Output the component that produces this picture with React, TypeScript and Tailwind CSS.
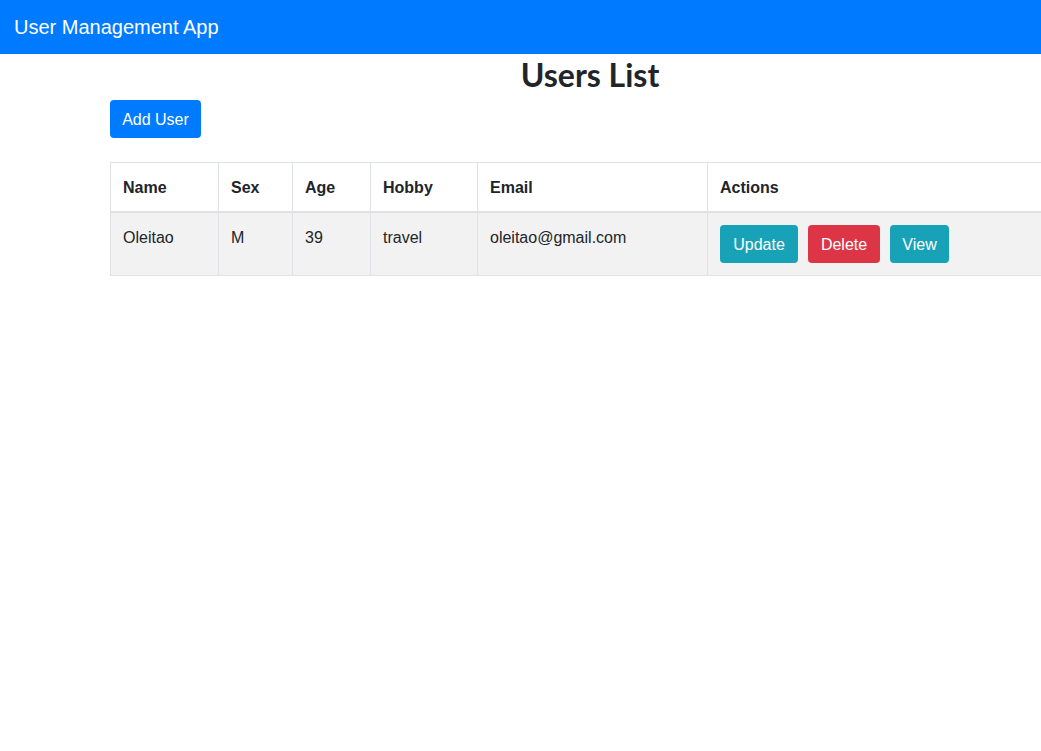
export default function App() {
  const font = { fontFamily: '"Liberation Sans", Arial, sans-serif' };
  const cell = "border border-[#dee2e6] px-3 pt-[13px] pb-[11px] align-top";
  return (
    <div className="w-full overflow-hidden bg-white text-[#212529]" style={font}>
      {/* Navbar */}
      <nav className="h-[54px] bg-[#007bff] flex items-center pl-[14px]">
        <span className="text-[20px] text-white leading-[30px]">User Management App</span>
      </nav>

      {/* Contenido */}
      <div className="ml-[110px] w-[960px]">
        <h2 className="mt-[2px] h-[38px] text-center text-[32px] leading-[38px] font-bold font-['Lato',sans-serif]">
          Users List
        </h2>
        <button className="mt-[6px] w-[91px] h-[38px] pt-[1px] rounded bg-[#007bff] text-white text-[16px] leading-6">
          Add User
        </button>

        <table className="mt-6 w-[960px] border-collapse table-fixed text-[16px] leading-6">
          <colgroup>
            <col className="w-[108px]" />
            <col className="w-[74px]" />
            <col className="w-[78px]" />
            <col className="w-[107px]" />
            <col className="w-[230px]" />
            <col />
          </colgroup>
          <thead>
            <tr>
              {["Name", "Sex", "Age", "Hobby", "Email", "Actions"].map((h) => (
                <th
                  key={h}
                  className="border border-[#dee2e6] border-b-2 px-3 pt-[13px] pb-[11px] text-left font-bold align-bottom"
                >
                  {h}
                </th>
              ))}
            </tr>
          </thead>
          <tbody>
            <tr className="bg-[#f2f2f2]">
              <td className={cell}>Oleitao</td>
              <td className={cell}>M</td>
              <td className={cell}>39</td>
              <td className={cell}>travel</td>
              <td className={cell}>oleitao@gmail.com</td>
              <td className="border border-[#dee2e6] p-3 align-top">
                <div className="flex gap-[10px]">
                  <button className="w-[78px] h-[38px] pt-[1px] rounded bg-[#17a2b8] text-white">Update</button>
                  <button className="w-[72px] h-[38px] pt-[1px] rounded bg-[#dc3545] text-white">Delete</button>
                  <button className="w-[59px] h-[38px] pt-[1px] rounded bg-[#17a2b8] text-white">View</button>
                </div>
              </td>
            </tr>
          </tbody>
        </table>
      </div>
    </div>
  );
}
